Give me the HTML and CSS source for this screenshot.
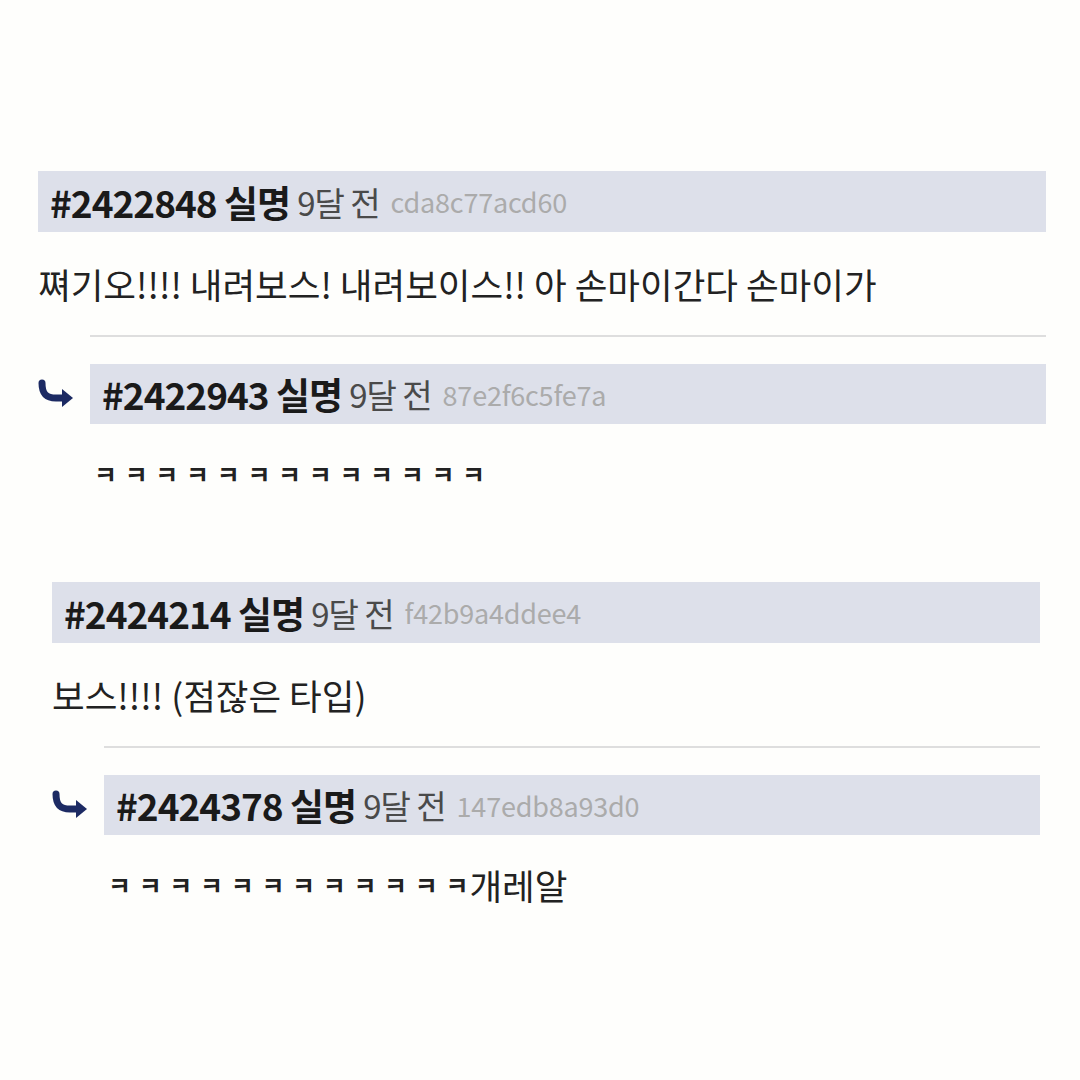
FILE: index.html
```html
<!DOCTYPE html>
<html>
<head>
    <title>댓글</title>
    <link rel="stylesheet" href="styles.css">
</head>
<body>
    <div class="page">
        <div class="thread first">
            <div class="head">
                <span class="num">#2422848 실명</span>
                <span class="ago">9달 전</span>
                <span class="hash">cda8c77acd60</span>
            </div>
            <div class="text">쪄기오!!!! 내려보스! 내려보이스!! 아 손마이간다 손마이가</div>
            <div class="rule"></div>
            <div class="reply">
                <svg class="arrow" width="52" height="32" viewBox="0 0 52 32">
                    <path d="M4 5 C4 16 8 20 18 20 H26" fill="none" stroke="#1c2a63" stroke-width="7" stroke-linecap="round"/>
                    <polygon points="24,11 35,20 24,29" fill="#1c2a63"/>
                </svg>
                <div class="head">
                    <span class="num">#2422943 실명</span>
                    <span class="ago">9달 전</span>
                    <span class="hash">87e2f6c5fe7a</span>
                </div>
            </div>
            <div class="text sub"><span class="kk">ㅋ ㅋ ㅋ ㅋ ㅋ ㅋ ㅋ ㅋ ㅋ ㅋ ㅋ ㅋ ㅋ</span></div>
        </div>

        <div class="thread second">
            <div class="head">
                <span class="num">#2424214 실명</span>
                <span class="ago">9달 전</span>
                <span class="hash">f42b9a4ddee4</span>
            </div>
            <div class="text">보스!!!! (점잖은 타입)</div>
            <div class="rule"></div>
            <div class="reply">
                <svg class="arrow" width="52" height="32" viewBox="0 0 52 32">
                    <path d="M4 5 C4 16 8 20 18 20 H26" fill="none" stroke="#1c2a63" stroke-width="7" stroke-linecap="round"/>
                    <polygon points="24,11 35,20 24,29" fill="#1c2a63"/>
                </svg>
                <div class="head">
                    <span class="num">#2424378 실명</span>
                    <span class="ago">9달 전</span>
                    <span class="hash">147edb8a93d0</span>
                </div>
            </div>
            <div class="text sub"><span class="kk">ㅋ ㅋ ㅋ ㅋ ㅋ ㅋ ㅋ ㅋ ㅋ ㅋ ㅋ ㅋ</span>개레알</div>
        </div>
    </div>
</body>
</html>
```

FILE: styles.css
```css
body {
    margin: 0;
    background-color: #fefefc;
    font-family: "Noto Sans CJK KR", "Noto Sans", sans-serif;
    color: #1e1e1e;
}
.page {
    padding-top: 171px;
}
.thread {
    display: flex;
    flex-direction: column;
}
.thread.first {
    margin-left: 38px;
    width: 1008px;
}
.thread.second {
    margin-top: 60px;
    margin-left: 52px;
    width: 988px;
}
.head {
    height: 61px;
    background-color: #dde0ea;
    display: flex;
    align-items: center;
    gap: 7px;
    padding-left: 12px;
    white-space: nowrap;
}
.num {
    font-size: 37px;
    font-weight: bold;
    color: #1a1a1a;
    letter-spacing: -1px;
}
.ago {
    font-size: 33px;
    color: #4a4a4a;
    letter-spacing: -1px;
}
.hash {
    font-size: 27px;
    color: #ababab;
    margin-left: 4px;
    letter-spacing: -0.2px;
}
.text {
    height: 103px;
    display: flex;
    align-items: center;
    font-size: 35.5px;
    color: #222;
}
.text.sub {
    height: 98px;
    padding-left: 56px;
}
.kk {
    font-size: 25px;
    font-weight: bold;
    letter-spacing: 1px;
}
.rule {
    height: 2px;
    margin-left: 52px;
    background-color: #dedede;
}
.reply {
    display: flex;
    align-items: center;
    margin-top: 27px;
}
.reply .head {
    flex: 1;
    height: 60px;
}
.arrow {
    flex-shrink: 0;
}
```
